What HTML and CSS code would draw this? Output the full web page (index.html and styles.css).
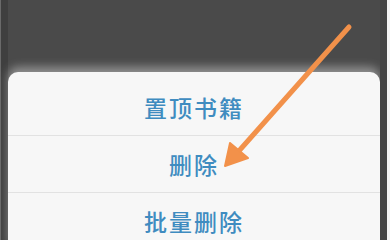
FILE: index.html
```html
<!DOCTYPE html>
<html lang="zh-CN">
<head>
    <meta charset="UTF-8">
    <meta name="viewport" content="width=device-width, initial-scale=1.0">
    <title>书架菜单</title>
    <link rel="stylesheet" href="styles.css">
</head>
<body>
    <div class="screen">
        <div class="edge-left"></div>
        <div class="stage">
            <div class="sheet">
                <div class="item">置顶书籍</div>
                <div class="item">删除</div>
                <div class="item">批量删除</div>
            </div>
        </div>
        <div class="edge-right"></div>

        <!-- annotation arrow -->
        <svg class="arrow" width="390" height="240" viewBox="0 0 390 240">
            <line x1="349" y1="27" x2="238" y2="152" stroke="#f2914a" stroke-width="5" stroke-linecap="round"/>
            <polygon points="225,166 230,143 248,158" fill="#f2914a" stroke="#f2914a" stroke-width="2" stroke-linejoin="round"/>
        </svg>
    </div>
</body>
</html>
```

FILE: styles.css
```css
body {
    margin: 0;
    padding: 0;
    background-color: #4a4a4a;
    font-family: "Noto Sans CJK SC", "Noto Sans", sans-serif;
    overflow: hidden;
}
.screen {
    position: relative;
    display: flex;
    width: 390px;
    height: 240px;
    overflow: hidden;
}
.edge-left {
    width: 8px;
    border-left: 1px solid #6a6a6a;
    background: #3f3f3f;
    box-sizing: border-box;
}
.edge-right {
    width: 10px;
    border-right: 3px solid #f4f4f4;
    background: #454545;
    box-sizing: border-box;
}
.stage {
    flex: 1;
    padding-top: 72px;
}
.sheet {
    background: #f7f7f7;
    border-radius: 10px 10px 0 0;
    padding-top: 7px;
    box-shadow: 0 -5px 10px rgba(255, 255, 255, 0.4);
}
.item {
    height: 56px;
    line-height: 56px;
    text-align: center;
    color: #3f8cc0;
    font-size: 23px;
    font-weight: 500;
    letter-spacing: 2px;
    border-bottom: 1px solid #e2e2e2;
}
.arrow {
    position: absolute;
    top: 0;
    left: 0;
}
```
